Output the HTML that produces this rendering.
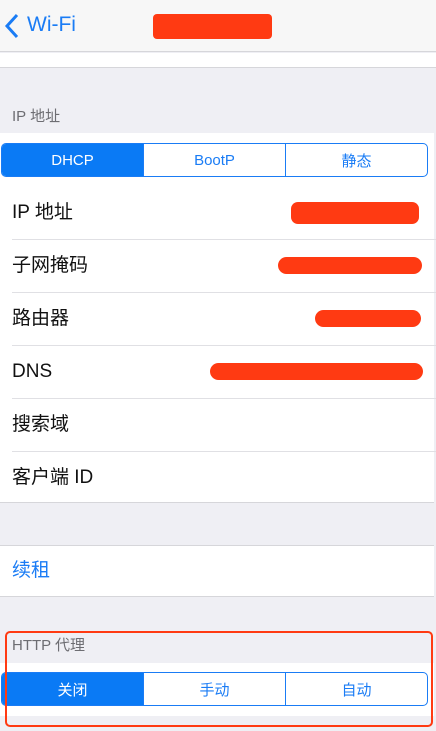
<!DOCTYPE html>
<html><head><meta charset="utf-8"><style>
*{margin:0;padding:0;box-sizing:border-box}
body{width:436px;height:731px;background:#efeff4;font-family:"Liberation Sans","Noto Sans CJK SC",sans-serif;position:relative;overflow:hidden}
.a{position:absolute}
.nav{left:0;top:0;width:436px;height:52px;background:#f7f7f7;border-bottom:1px solid #d6d6da}
.white{background:#fff}
.red{background:#ff3a12;border-radius:7px}
.row{left:12px;font-size:19px;color:#111;height:24px;line-height:24px}
.div{left:12px;width:424px;height:1px;background:#e0e0e4}
.seg{display:flex;border:1px solid #1a7cf5;border-radius:5px;overflow:hidden}
.seg div{flex:1;display:flex;align-items:center;justify-content:center;color:#1a7cf5;font-size:15px;border-left:1px solid #1a7cf5}
.seg div:first-child{border-left:none;background:#0a7af5;color:#fff}
.lbl{left:12px;font-size:15px;color:#6d6d72;height:20px;line-height:20px}
</style></head><body>
<div class="a nav"></div>
<svg class="a" style="left:4px;top:13px" width="16" height="26" viewBox="0 0 16 26"><path d="M13 2 L3 13 L13 24" fill="none" stroke="#1a7cf5" stroke-width="3"/></svg>
<div class="a" style="left:27px;top:12px;font-size:21px;color:#1a7cf5;line-height:26px">Wi-Fi</div>
<div class="a red" style="left:153px;top:14px;width:119px;height:25px;border-radius:4px"></div>
<div class="a white" style="left:0;top:53px;width:436px;height:15px;border-bottom:1px solid #d6d6da"></div>
<div class="a lbl" style="top:107px">IP 地址</div>
<div class="a white" style="left:0;top:133px;width:434px;height:370px;border-bottom:1px solid #d6d6da"></div>
<div class="a seg" style="left:1px;top:143px;width:427px;height:34px"><div>DHCP</div><div>BootP</div><div>静态</div></div>
<div class="a row" style="top:201px">IP 地址</div>
<div class="a red" style="left:291px;top:202px;width:128px;height:22px"></div>
<div class="a div" style="top:239px"></div>
<div class="a row" style="top:254px">子网掩码</div>
<div class="a red" style="left:278px;top:257px;width:144px;height:17px;border-radius:9px"></div>
<div class="a div" style="top:292px"></div>
<div class="a row" style="top:307px">路由器</div>
<div class="a red" style="left:315px;top:310px;width:106px;height:17px;border-radius:9px"></div>
<div class="a div" style="top:345px"></div>
<div class="a row" style="top:360px">DNS</div>
<div class="a red" style="left:210px;top:363px;width:213px;height:17px;border-radius:9px"></div>
<div class="a div" style="top:398px"></div>
<div class="a row" style="top:413px">搜索域</div>
<div class="a div" style="top:451px"></div>
<div class="a row" style="top:466px">客户端 ID</div>
<div class="a white" style="left:0;top:545px;width:434px;height:52px;border-top:1px solid #d6d6da;border-bottom:1px solid #d6d6da"></div>
<div class="a row" style="top:559px;color:#1a7cf5">续租</div>
<div class="a lbl" style="top:636px">HTTP 代理</div>
<div class="a white" style="left:0;top:663px;width:434px;height:53px"></div>
<div class="a seg" style="left:1px;top:672px;width:427px;height:34px"><div>关闭</div><div>手动</div><div>自动</div></div>
<div class="a" style="left:5px;top:631px;width:428px;height:96px;border:2px solid #ff3a12;border-radius:5px"></div>
</body></html>
